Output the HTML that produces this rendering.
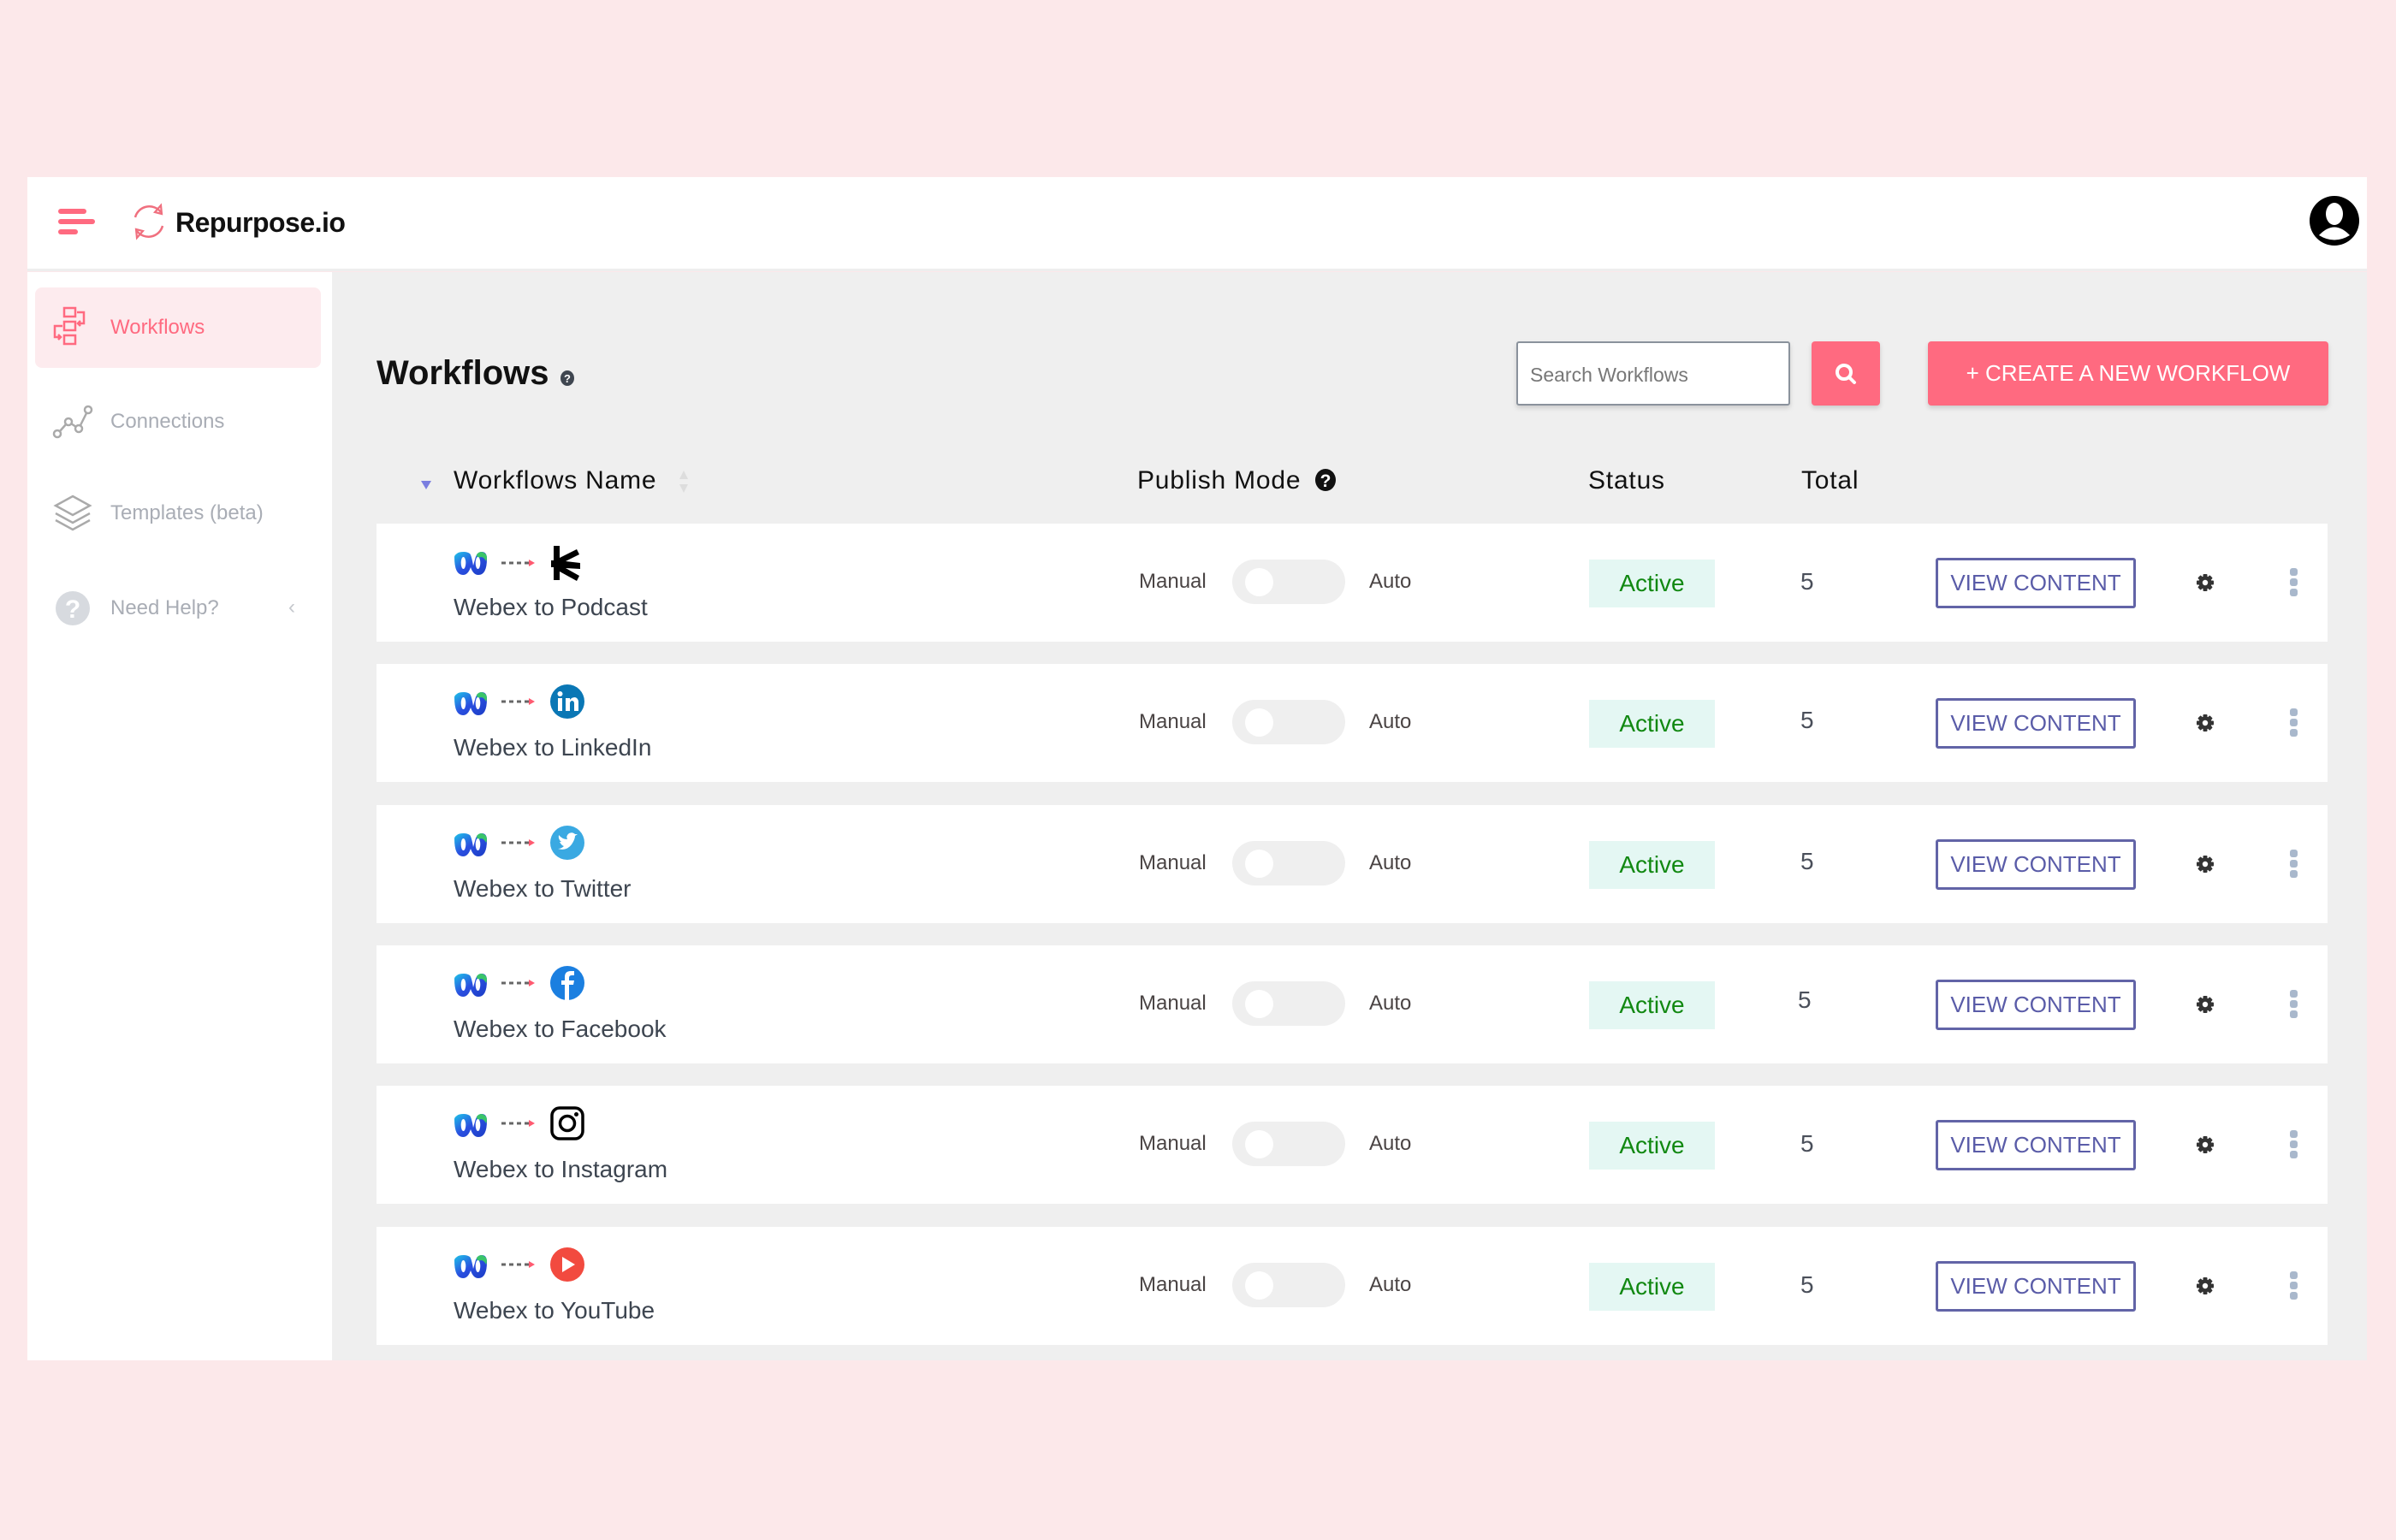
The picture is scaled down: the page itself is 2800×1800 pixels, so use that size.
<!DOCTYPE html>
<html><head><meta charset="utf-8"><style>
*{margin:0;padding:0;box-sizing:border-box}
body{width:2800px;height:1800px;background:#fce8ea;font-family:"Liberation Sans",sans-serif;position:relative;overflow:hidden}
.a{position:absolute}
.hdr{left:32px;top:207px;width:2734px;height:110px;background:#fff;border-bottom:3px solid #eee}
.side{left:32px;top:318px;width:356px;height:1272px;background:#fff}
.main{left:388px;top:318px;width:2378px;height:1272px;background:#efefef}
.nav{font-size:24px;color:#a9adb5}
.row{left:440px;width:2280px;height:138px;background:#fff}
.t{font-size:24px;color:#4a4444}
.name{font-size:28px;color:#3d4550}
.tog{width:132px;height:52px;border-radius:26px;background:#efefef}
.tog:after{content:"";position:absolute;left:15px;top:10px;width:33px;height:33px;border-radius:50%;background:#fff}
.badge{width:147px;height:56px;background:#e4f7f3;color:#118811;font-size:28px;text-align:center;line-height:56px}
.vc{width:234px;height:59px;border:3px solid #6264a7;border-radius:3px;color:#5a5ca8;font-size:26px;text-align:center;line-height:53px}
.hd{font-size:30px;color:#111;letter-spacing:0.8px}
.dot{width:9px;height:9px;border-radius:3px;background:#a9b8cc;left:0}
.gear{left:2565px;top:57px}
</style></head><body>
<svg width="0" height="0" style="position:absolute"><defs>
<linearGradient id="wg" x1="0" y1="0" x2="1" y2="1"><stop offset="0" stop-color="#1ec4e8"/><stop offset=".5" stop-color="#2a4fe0"/><stop offset="1" stop-color="#1b3cc4"/></linearGradient>
<g id="webex"><path d="M1 10 Q1 31 11 31 Q17 31 20 22 Q23 31 29 31 Q39 31 39 12 Q39 4 33 4 Q27 4 25 13 L23 20 Q21 8 19 6 Q16 4 12 4 Q6 4 4 6 Q1 8 1 10Z" fill="url(#wg)"/><path d="M27 7 Q32 1 38 7 Q40 11 38 15 Q34 7 28 12Z" fill="#3ac46a"/><ellipse cx="11.5" cy="17" rx="2.8" ry="7" fill="#fff"/><ellipse cx="28.5" cy="17" rx="2.8" ry="7" fill="#fff"/></g>
<g id="arr"><path d="M0 4 H5 M9 4 H14 M18 4 H23 M27 4 H32" stroke="#666" stroke-width="3"/><path d="M32 0 L39 4 L32 8Z" fill="#ff5a70"/></g>
<g id="g"><g fill="#333"><circle cx="12" cy="12" r="7.5"/><g id="tt"><rect x="9.5" y="2" width="5" height="20" rx="1"/></g><use href="#tt" transform="rotate(45 12 12)"/><use href="#tt" transform="rotate(90 12 12)"/><use href="#tt" transform="rotate(135 12 12)"/></g><circle cx="12" cy="12" r="3.2" fill="#fff"/></g>
</defs></svg>
<div class="a hdr"></div>
<div class="a" style="left:68px;top:244px;width:33px;height:6px;border-radius:3px;background:#ff6a80"></div>
<div class="a" style="left:68px;top:256px;width:43px;height:6px;border-radius:3px;background:#ff6a80"></div>
<div class="a" style="left:68px;top:268px;width:23px;height:6px;border-radius:3px;background:#ff6a80"></div>
<svg class="a" style="left:152px;top:236px" width="44" height="46" viewBox="0 0 44 46"><path d="M6 18 A17 17 0 0 1 36 12" fill="none" stroke="#f0707f" stroke-width="2.5"/><path d="M38 28 A17 17 0 0 1 8 34" fill="none" stroke="#f0707f" stroke-width="2.5"/><path d="M36 4 L37 14 L29 12Z M8 42 L7 32 L15 34Z" fill="none" stroke="#f0707f" stroke-width="2.2"/></svg>
<div class="a" style="left:205px;top:242px;font-size:32px;font-weight:bold;color:#111;letter-spacing:-0.5px">Repurpose.io</div>
<svg class="a" style="left:2698px;top:228px" width="60" height="60" viewBox="0 0 60 60"><circle cx="30" cy="30" r="29" fill="#000"/><ellipse cx="30" cy="22" rx="10" ry="13" fill="#fff"/><path d="M12 47 Q30 28 48 47 Q30 58 12 47Z" fill="#fff"/></svg>
<div class="a side"></div>
<div class="a" style="left:41px;top:336px;width:334px;height:94px;border-radius:8px;background:#fdebee"></div>
<svg class="a" style="left:60px;top:358px" width="50" height="48" viewBox="0 0 50 48"><g fill="none" stroke="#ff6a80" stroke-width="2.5"><rect x="15" y="2" width="13" height="10"/><rect x="15" y="18" width="13" height="10"/><rect x="15" y="34" width="13" height="10"/><path d="M30 7 H38 V20 H31 M34 17 L31 20 L34 23"/><path d="M13 23 H4 V36 H11 M8 33 L11 36 L8 39"/></g></svg>
<div class="a nav" style="left:129px;top:369px;color:#ff6a80">Workflows</div>
<svg class="a" style="left:60px;top:472px" width="50" height="42" viewBox="0 0 50 42"><g fill="none" stroke="#aaa" stroke-width="2.5"><circle cx="7" cy="35" r="4"/><circle cx="20" cy="21" r="4"/><circle cx="32" cy="29" r="4"/><circle cx="43" cy="7" r="4"/><path d="M10 32 L17 24 M23 23 L29 27 M34 25 L41 11"/></g></svg>
<div class="a nav" style="left:129px;top:479px">Connections</div>
<svg class="a" style="left:62px;top:578px" width="46" height="44" viewBox="0 0 46 44"><g fill="none" stroke="#aaa" stroke-width="2.5"><path d="M23 2 L43 13 L23 24 L3 13Z"/><path d="M3 22 L23 33 L43 22"/><path d="M3 30 L23 41 L43 30"/></g></svg>
<div class="a nav" style="left:129px;top:586px">Templates (beta)</div>
<svg class="a" style="left:64px;top:690px" width="42" height="42" viewBox="0 0 42 42"><circle cx="21" cy="21" r="20" fill="#d7dadf"/><text x="21" y="32" font-size="30" font-weight="bold" fill="#fff" text-anchor="middle" font-family="Liberation Sans">?</text></svg>
<div class="a nav" style="left:129px;top:697px">Need Help?</div>
<div class="a" style="left:337px;top:696px;font-size:24px;color:#c5c8cd">‹</div>
<div class="a main"></div>
<div class="a" style="left:440px;top:414px;font-size:40px;font-weight:bold;color:#111">Workflows</div>
<svg class="a" style="left:654px;top:432px" width="18" height="20" viewBox="0 0 18 20"><ellipse cx="9" cy="10" rx="8" ry="9" fill="#3f4650"/><text x="9" y="15" font-size="13" font-weight="bold" fill="#fff" text-anchor="middle" font-family="Liberation Sans">?</text></svg>
<div class="a" style="left:1772px;top:399px;width:320px;height:75px;background:#fff;border:2px solid #8a929c;border-radius:3px;box-shadow:0 3px 6px rgba(0,0,0,.15);font-size:23px;color:#777;padding:24px 0 0 14px">Search Workflows</div>
<div class="a" style="left:2117px;top:399px;width:80px;height:75px;background:#ff6a80;border-radius:4px;box-shadow:0 3px 6px rgba(0,0,0,.15)"></div>
<svg class="a" style="left:2144px;top:424px" width="26" height="26" viewBox="0 0 26 26"><circle cx="11" cy="11" r="8" fill="none" stroke="#fff" stroke-width="4"/><path d="M17 17 L23 23" stroke="#fff" stroke-width="4" stroke-linecap="round"/></svg>
<div class="a" style="left:2253px;top:399px;width:468px;height:75px;background:#ff6a80;border-radius:4px;box-shadow:0 3px 6px rgba(0,0,0,.15);color:#fff;font-size:26px;text-align:center;line-height:75px">+ CREATE A NEW WORKFLOW</div>
<svg class="a" style="left:492px;top:560px" width="14" height="14"><path d="M0 2 H12 L6 12Z" fill="#7a7ee0"/></svg>
<div class="a hd" style="left:530px;top:545px">Workflows Name</div>
<svg class="a" style="left:793px;top:550px" width="12" height="26"><path d="M6 0 L11 10 H1Z M6 26 L11 16 H1Z" fill="#ddd"/></svg>
<div class="a hd" style="left:1329px;top:545px">Publish Mode</div>
<svg class="a" style="left:1536px;top:547px" width="26" height="28" viewBox="0 0 26 28"><ellipse cx="13" cy="14" rx="12" ry="13" fill="#111"/><text x="13" y="22" font-size="21" font-weight="bold" fill="#fff" text-anchor="middle" font-family="Liberation Sans">?</text></svg>
<div class="a hd" style="left:1856px;top:545px">Status</div>
<div class="a hd" style="left:2105px;top:545px">Total</div>

<div class="a row" style="top:612px"></div>
<div class="a row" style="top:776px"></div>
<div class="a row" style="top:941px"></div>
<div class="a row" style="top:1105px"></div>
<div class="a row" style="top:1269px"></div>
<div class="a row" style="top:1434px"></div>

<svg class="a" style="left:530px;top:636px" width="200" height="46"><use href="#webex" y="5"/><use href="#arr" x="56" y="18"/>
<g transform="translate(114,2)" fill="#000"><path d="M3 0 H10 L10 40 H3Z"/><path d="M10 14 L30 4 L33 10 L17 18 L34 20 L34 27 L17 26 L33 35 L30 41 L10 30Z"/><path d="M0 17 H13 V25 H0Z"/></g></svg>
<svg class="a" style="left:530px;top:800px" width="200" height="46"><use href="#webex" y="5"/><use href="#arr" x="56" y="16"/><circle cx="133" cy="20" r="20" fill="#0a77b5"/><rect x="122" y="16" width="5" height="15" fill="#fff"/><circle cx="124.5" cy="11" r="3" fill="#fff"/><path d="M131 16 H136 V18 Q138 15 142 15 Q146 16 146 21 V31 H141 V22 Q141 19 138 19 Q136 20 136 22 V31 H131Z" fill="#fff"/></svg>
<svg class="a" style="left:530px;top:965px" width="200" height="46"><use href="#webex" y="5"/><use href="#arr" x="56" y="16"/><circle cx="133" cy="20" r="20" fill="#3aa9e2"/><path d="M122 27 Q132 30 138 22 Q142 16 142 12 L145 10 L142 10 Q139 7 135 9 Q131 12 133 16 Q127 16 123 11 Q122 16 126 19 L124 19 Q126 23 129 24 Q126 27 122 27Z" fill="#fff"/></svg>
<svg class="a" style="left:530px;top:1129px" width="200" height="46"><use href="#webex" y="5"/><use href="#arr" x="56" y="16"/><circle cx="133" cy="20" r="20" fill="#1b7fe0"/><path d="M130 40 V22 H126 V17 H130 V13 Q130 6 137 6 H141 V11 H138 Q135 11 135 14 V17 H141 L140 22 H135 V40Z" fill="#fff"/></svg>
<svg class="a" style="left:530px;top:1293px" width="200" height="46"><use href="#webex" y="5"/><use href="#arr" x="56" y="16"/><rect x="115" y="2" width="36" height="36" rx="9" fill="none" stroke="#000" stroke-width="3.5"/><circle cx="133" cy="20" r="8.5" fill="none" stroke="#000" stroke-width="3.5"/><circle cx="143.5" cy="9.5" r="2.5" fill="#000"/></svg>
<svg class="a" style="left:530px;top:1458px" width="200" height="46"><use href="#webex" y="5"/><use href="#arr" x="56" y="16"/><circle cx="133" cy="20" r="20" fill="#f24a3f"/><path d="M127 11 L142 20 L127 29Z" fill="#fff"/></svg>

<div class="a name" style="left:530px;top:694px">Webex to Podcast</div>
<div class="a name" style="left:530px;top:858px">Webex to LinkedIn</div>
<div class="a name" style="left:530px;top:1023px">Webex to Twitter</div>
<div class="a name" style="left:530px;top:1187px">Webex to Facebook</div>
<div class="a name" style="left:530px;top:1351px">Webex to Instagram</div>
<div class="a name" style="left:530px;top:1516px">Webex to YouTube</div>

<div class="a" style="left:0;top:612px">
<div class="a t" style="left:1331px;top:54px">Manual</div><div class="a tog" style="left:1440px;top:42px"></div><div class="a t" style="left:1600px;top:54px">Auto</div>
<div class="a badge" style="left:1857px;top:42px">Active</div><div class="a" style="left:2104px;top:52px;font-size:28px;color:#4a4f5a">5</div>
<div class="a vc" style="left:2262px;top:40px">VIEW CONTENT</div><svg class="a gear" width="24" height="24"><use href="#g"/></svg>
<div class="a dot" style="left:2676px;top:52px"></div><div class="a dot" style="left:2676px;top:64px"></div><div class="a dot" style="left:2676px;top:76px"></div></div>
<div class="a" style="left:0;top:776px">
<div class="a t" style="left:1331px;top:54px">Manual</div><div class="a tog" style="left:1440px;top:42px"></div><div class="a t" style="left:1600px;top:54px">Auto</div>
<div class="a badge" style="left:1857px;top:42px">Active</div><div class="a" style="left:2104px;top:50px;font-size:28px;color:#4a4f5a">5</div>
<div class="a vc" style="left:2262px;top:40px">VIEW CONTENT</div><svg class="a gear" width="24" height="24"><use href="#g"/></svg>
<div class="a dot" style="left:2676px;top:52px"></div><div class="a dot" style="left:2676px;top:64px"></div><div class="a dot" style="left:2676px;top:76px"></div></div>
<div class="a" style="left:0;top:941px">
<div class="a t" style="left:1331px;top:54px">Manual</div><div class="a tog" style="left:1440px;top:42px"></div><div class="a t" style="left:1600px;top:54px">Auto</div>
<div class="a badge" style="left:1857px;top:42px">Active</div><div class="a" style="left:2104px;top:50px;font-size:28px;color:#4a4f5a">5</div>
<div class="a vc" style="left:2262px;top:40px">VIEW CONTENT</div><svg class="a gear" width="24" height="24"><use href="#g"/></svg>
<div class="a dot" style="left:2676px;top:52px"></div><div class="a dot" style="left:2676px;top:64px"></div><div class="a dot" style="left:2676px;top:76px"></div></div>
<div class="a" style="left:0;top:1105px">
<div class="a t" style="left:1331px;top:54px">Manual</div><div class="a tog" style="left:1440px;top:42px"></div><div class="a t" style="left:1600px;top:54px">Auto</div>
<div class="a badge" style="left:1857px;top:42px">Active</div><div class="a" style="left:2101px;top:48px;font-size:28px;color:#4a4f5a">5</div>
<div class="a vc" style="left:2262px;top:40px">VIEW CONTENT</div><svg class="a gear" width="24" height="24"><use href="#g"/></svg>
<div class="a dot" style="left:2676px;top:52px"></div><div class="a dot" style="left:2676px;top:64px"></div><div class="a dot" style="left:2676px;top:76px"></div></div>
<div class="a" style="left:0;top:1269px">
<div class="a t" style="left:1331px;top:54px">Manual</div><div class="a tog" style="left:1440px;top:42px"></div><div class="a t" style="left:1600px;top:54px">Auto</div>
<div class="a badge" style="left:1857px;top:42px">Active</div><div class="a" style="left:2104px;top:52px;font-size:28px;color:#4a4f5a">5</div>
<div class="a vc" style="left:2262px;top:40px">VIEW CONTENT</div><svg class="a gear" width="24" height="24"><use href="#g"/></svg>
<div class="a dot" style="left:2676px;top:52px"></div><div class="a dot" style="left:2676px;top:64px"></div><div class="a dot" style="left:2676px;top:76px"></div></div>
<div class="a" style="left:0;top:1434px">
<div class="a t" style="left:1331px;top:54px">Manual</div><div class="a tog" style="left:1440px;top:42px"></div><div class="a t" style="left:1600px;top:54px">Auto</div>
<div class="a badge" style="left:1857px;top:42px">Active</div><div class="a" style="left:2104px;top:52px;font-size:28px;color:#4a4f5a">5</div>
<div class="a vc" style="left:2262px;top:40px">VIEW CONTENT</div><svg class="a gear" width="24" height="24"><use href="#g"/></svg>
<div class="a dot" style="left:2676px;top:52px"></div><div class="a dot" style="left:2676px;top:64px"></div><div class="a dot" style="left:2676px;top:76px"></div></div>
</body></html>
